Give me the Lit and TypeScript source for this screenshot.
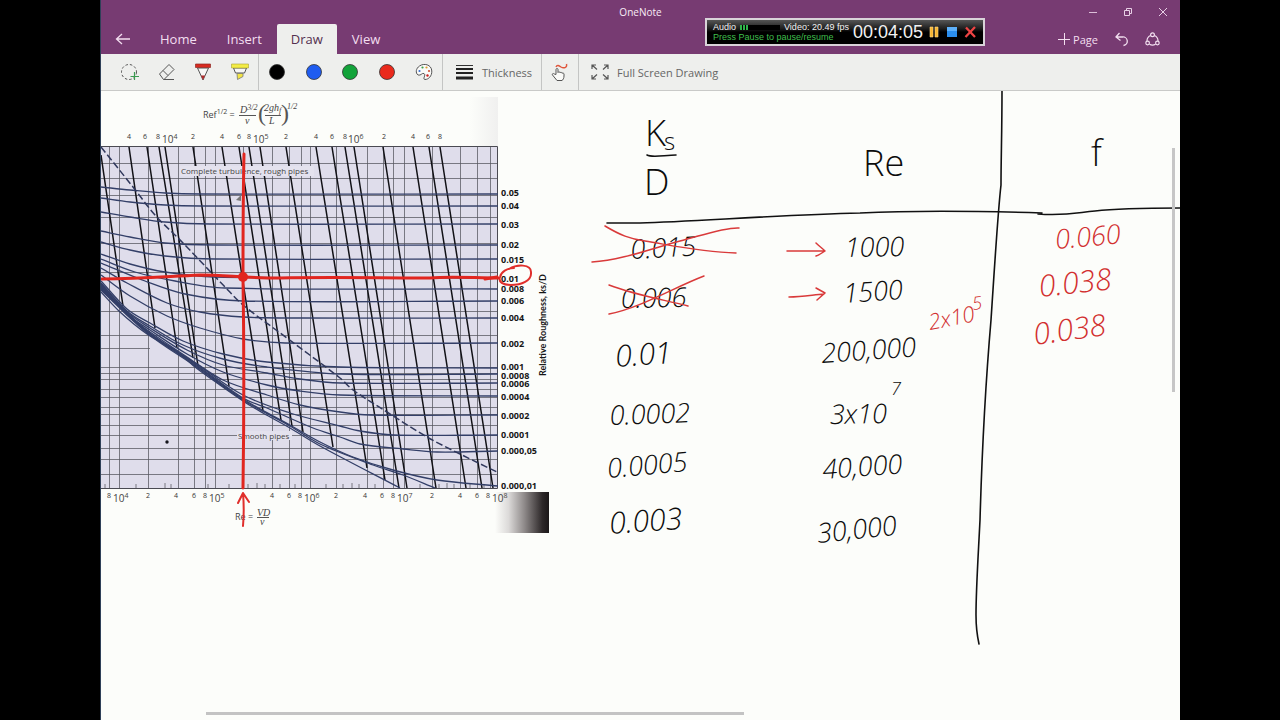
import { LitElement, html, svg, css } from "lit";
import { customElement, state } from "lit/decorators.js";
import { classMap } from "lit/directives/class-map.js";

type Mark = [string, number];
type Ink = { t: string; x: number; y: number; r?: number; red?: boolean; size?: string };

const TOP_TICKS: Mark[] = [
  ["4", 129], ["6", 145], ["8", 158], ["2", 193], ["4", 222], ["6", 239], ["8", 249],
  ["2", 286], ["4", 316], ["6", 332], ["8", 345], ["2", 384], ["4", 413], ["6", 428], ["8", 440],
];
const TOP_DECADES: Mark[] = [["4", 162], ["5", 253], ["6", 348]];
const BOTTOM_TICKS: Mark[] = [
  ["8", 109], ["2", 148], ["4", 176], ["6", 194], ["8", 205], ["4", 272], ["6", 289], ["8", 300],
  ["2", 336], ["4", 365], ["6", 382], ["8", 393], ["2", 432], ["4", 460], ["6", 477], ["8", 488],
];
const BOTTOM_DECADES: Mark[] = [["4", 113], ["5", 209], ["6", 304], ["7", 397], ["8", 492]];
const ROUGHNESS: Mark[] = [
  ["0.05", 196], ["0.04", 209], ["0.03", 228], ["0.02", 248], ["0.015", 263], ["0.01", 282],
  ["0.008", 292], ["0.006", 304], ["0.004", 321], ["0.002", 347], ["0.001", 370], ["0.0008", 379],
  ["0.0006", 387], ["0.0004", 400], ["0.0002", 419], ["0.0001", 438], ["0.000,05", 454], ["0.000,01", 489],
];

const GRID_X = [109, 119, 148, 178, 194, 205, 215, 243, 272, 289, 301, 310, 336, 367, 383, 393, 404, 432, 460, 477, 490];
const GRID_Y = [163, 178, 195, 217, 243, 272, 311, 335, 367, 373, 379, 389, 397, 407, 414, 425, 435, 448, 459, 474];

const SLANTED = [
  [101, 155, 123, 306], [129, 147, 155, 328], [147, 147, 177, 348], [159, 147, 193, 358],
  [165, 147, 198, 366], [193, 147, 229, 386], [222, 147, 263, 411], [239, 147, 281, 420],
  [249, 147, 292, 426], [260, 147, 303, 432], [286, 147, 333, 447], [316, 147, 367, 468],
  [332, 147, 385, 480], [345, 147, 399, 488], [354, 147, 407, 488], [383, 147, 436, 488],
  [413, 147, 466, 488], [429, 147, 482, 488], [440, 147, 493, 488],
];

const CURVES: number[][] = [
  [101, 187, 130, 190, 165, 193, 200, 194, 498, 194],
  [101, 198, 130, 202, 165, 205, 200, 206, 498, 206],
  [101, 212, 130, 217, 165, 222, 210, 224, 498, 224],
  [101, 231, 130, 237, 165, 243, 215, 245, 498, 245],
  [101, 242, 130, 250, 165, 256, 215, 259, 498, 259],
  [101, 254, 130, 264, 165, 272, 215, 277, 498, 278],
  [101, 259, 135, 272, 175, 281, 225, 288, 498, 289],
  [101, 263, 145, 281, 185, 294, 243, 301, 498, 301],
  [101, 268, 127, 283, 167, 303, 200, 312, 243, 317, 300, 318, 498, 318],
  [101, 275, 130, 296, 167, 316, 200, 328, 243, 339, 285, 343, 498, 343],
  [101, 281, 127, 309, 150, 323, 183, 341, 223, 354, 267, 362, 340, 367, 498, 368],
  [101, 283, 127, 311, 150, 326, 183, 345, 223, 359, 267, 367, 340, 374, 498, 374],
  [101, 284, 127, 312, 150, 328, 187, 350, 223, 365, 267, 373, 300, 379, 340, 383, 498, 383],
  [101, 285, 127, 314, 150, 330, 187, 354, 223, 372, 267, 385, 300, 391, 340, 395, 498, 396],
  [101, 286, 127, 315, 150, 332, 187, 357, 223, 380, 267, 395, 300, 405, 340, 412, 370, 415, 498, 415],
  [101, 287, 147, 331, 195, 363, 243, 395, 290, 413, 340, 426, 360, 431, 393, 435, 498, 435],
  [101, 288, 147, 331, 195, 364, 243, 398, 267, 408, 313, 428, 340, 437, 360, 444, 403, 449, 437, 452, 498, 451],
  [101, 289, 147, 332, 195, 365, 243, 399, 290, 425, 320, 442, 353, 457, 393, 470, 437, 480, 498, 486],
  [101, 290, 147, 333, 195, 366, 243, 400, 290, 426, 320, 444, 373, 465, 403, 475, 435, 488],
  [101, 292, 120, 312, 147, 334, 175, 350, 195, 367, 217, 383, 243, 401, 263, 413, 290, 428, 320, 446, 400, 488],
];

const DASHED = [101, 147, 133, 187, 155, 215, 183, 243, 225, 287, 243, 305, 287, 338, 340, 378, 353, 390, 387, 412, 427, 437, 460, 454, 497, 472];

const INK: Ink[] = [
  { t: "K", x: 645, y: 146, size: "head" },
  { t: "s", x: 664, y: 150, size: "sub" },
  { t: "D", x: 644, y: 195, size: "head" },
  { t: "Re", x: 863, y: 176, size: "head" },
  { t: "f", x: 1091, y: 166, size: "head" },
  { t: "0.015", x: 631, y: 259, r: -3 },
  { t: "1000", x: 845, y: 257, r: -1 },
  { t: "0.006", x: 621, y: 308, r: -1 },
  { t: "1500", x: 844, y: 303, r: -4 },
  { t: "0.01", x: 616, y: 367, r: -4, size: "big" },
  { t: "200,000", x: 822, y: 363, r: -4 },
  { t: "0.0002", x: 610, y: 425, r: -2 },
  { t: "3x10", x: 830, y: 424, r: -1 },
  { t: "7", x: 891, y: 395, size: "small" },
  { t: "0.0005", x: 608, y: 478, r: -5 },
  { t: "40,000", x: 823, y: 479, r: -4 },
  { t: "0.003", x: 610, y: 534, r: -4, size: "big" },
  { t: "30,000", x: 818, y: 543, r: -6 },
  { t: "0.060", x: 1056, y: 249, r: -5, red: true },
  { t: "0.038", x: 1040, y: 297, r: -6, red: true, size: "big" },
  { t: "0.038", x: 1035, y: 345, r: -8, red: true, size: "big" },
  { t: "2x10", x: 930, y: 330, r: -11, red: true, size: "mid" },
  { t: "5", x: 973, y: 310, r: -8, red: true, size: "small" },
];

/** Smooth path through a flat list of x, y pairs. */
function through(p: number[]): string {
  let d = `M${p[0]} ${p[1]}`;
  const n = p.length / 2;
  const at = (i: number, k: number) => p[Math.max(0, Math.min(n - 1, i)) * 2 + k];
  for (let i = 0; i < n - 1; i++) {
    const dx = at(i + 1, 0) - at(i, 0);
    const slope = (j: number) => {
      const a = Math.max(0, j - 1);
      const b = Math.min(n - 1, j + 1);
      return (at(b, 1) - at(a, 1)) / (at(b, 0) - at(a, 0) || 1);
    };
    d += `C${at(i, 0) + dx / 3} ${at(i, 1) + (slope(i) * dx) / 3} ${at(i + 1, 0) - dx / 3} ${at(i + 1, 1) - (slope(i + 1) * dx) / 3} ${at(i + 1, 0)} ${at(i + 1, 1)}`;
  }
  return d;
}

@customElement("moody-page")
class MoodyPage extends LitElement {
  static styles = css`
    :host { display: block; }
    .sheet { display: block; width: 100%; height: 100%; font-family: "Open Sans", sans-serif; }
    .paper { fill: #dfddeb; }
    .grid { stroke: #55555f; stroke-width: 1; fill: none; opacity: 0.75; }
    .frame { stroke: #4a4a52; stroke-width: 1; fill: none; }
    .slant { stroke: #111116; stroke-width: 1.5; fill: none; }
    .curve { stroke: #333f68; stroke-width: 1.3; fill: none; }
    .dash { stroke: #30385c; stroke-width: 1.5; fill: none; stroke-dasharray: 7 3; }
    .tick { font-size: 7px; fill: #333; text-anchor: middle; }
    .decade { font-size: 10px; fill: #444; }
    .sup { font-size: 7px; }
    .note { font-size: 8px; fill: #444; }
    .patch { fill: #e4e2ee; }
    .formula { font-size: 9px; fill: #444; }
    .math { font-family: "Liberation Serif", serif; font-style: italic; font-size: 10px; fill: #444; }
    .exp { font-size: 8px; }
    .paren { font-family: "Liberation Serif", serif; font-size: 24px; fill: #555; font-weight: 400; }
    .thin { stroke: #555; stroke-width: 1; fill: none; }
    .rough { font-size: 9px; font-weight: 700; fill: #161616; }
    .axis { font-family: Lato, sans-serif; font-size: 9px; font-weight: 700; fill: #161616; text-anchor: middle; }
    .redline { stroke: #e1261f; stroke-width: 3; fill: none; stroke-linecap: round; stroke-linejoin: round; }
    .redthin { stroke: #e02f2c; stroke-width: 2; fill: none; stroke-linecap: round; stroke-linejoin: round; }
    .cross { stroke: #d93a3a; stroke-width: 1.5; fill: none; stroke-linecap: round; stroke-linejoin: round; }
    .dot { fill: #e1261f; }
    .blot { fill: #15151c; }
    .pen { stroke: #111; stroke-width: 1.6; fill: none; stroke-linecap: round; }
    .hand { font-family: "Open Sans", sans-serif; font-weight: 300; font-style: italic; font-size: 27px; fill: #0c0c0c; }
    .hand.red { fill: #d22f2f; }
    .hand.head { font-size: 36px; font-style: normal; }
    .hand.sub { font-size: 24px; font-style: normal; }
    .hand.big { font-size: 30px; }
    .hand.mid { font-size: 22px; }
    .hand.small { font-size: 18px; }
  `;

  render() {
    return html`<svg class="sheet" viewBox="101 91 1079 629" preserveAspectRatio="xMinYMin meet" role="img" aria-label="Moody diagram and friction factor table">
      <defs>
        <linearGradient id="shade"><stop offset="0" stop-color="#fcfdfa" /><stop offset="0.25" stop-color="#dcdad9" /><stop offset="0.55" stop-color="#8d8888" /><stop offset="0.88" stop-color="#2c2728" /><stop offset="1" stop-color="#1b1718" /></linearGradient>
        <linearGradient id="scan"><stop offset="0" stop-color="#fcfdfa" /><stop offset="1" stop-color="#f0f0ef" /></linearGradient>
      </defs>
      <rect x="470" y="97" width="28" height="50" fill="url(#scan)" />
      <rect x="495" y="492" width="54" height="41" fill="url(#shade)" />
      <rect class="paper" x="101" y="147" width="397" height="341" />
      ${this.chart()} ${this.labels()} ${this.table()} ${this.annotations()}
    </svg>`;
  }

  private chart() {
    return svg`
      <path class="grid" d=${GRID_X.map((x) => `M${x}.5 147V488`).join("") + GRID_Y.map((y) => `M101 ${y}.5H498`).join("") + "M101 348.5H150"} />
      <path class="grid" d="M105 488v-4M136 488v-4M165 488v-5M171 488v-4M208 488v-4M229 488v-4M248 488v-4M257 488v-5M265 488v-4M280 488v-4M295 488v-4M326 488v-4M343 488v-4M352 488v-5M359 488v-4M375 488v-4M420 488v-4M439 488v-4M447 488v-5M454 488v-4M470 488v-4M484 488v-4" />
      <path class="frame" d="M101 146.5H497.5V488.5H101" />
      <path class="slant" d=${SLANTED.map(([a, b, c, d]) => `M${a} ${b}L${c} ${d}`).join("")} />
      ${CURVES.map((c) => svg`<path class="curve" d=${through(c)} />`)}
      <path class="dash" d=${through(DASHED)} />
      <rect class="patch" x="180" y="166" width="134" height="10" />
      <text class="note" x="181" y="174">Complete turbulence, rough pipes</text>
      <rect class="patch" x="237" y="431" width="55" height="9" />
      <text class="note" x="238" y="439">Smooth pipes</text>
      <circle class="blot" cx="167" cy="442" r="1.7" />
      <path d="M236 200l5-5v6z" fill="#777" />`;
  }

  private decade(m: Mark, y: number) {
    return svg`<text class="decade" x=${m[1]} y=${y}>10<tspan class="sup" dy="-4">${m[0]}</tspan></text>`;
  }

  private labels() {
    return svg`
      ${TOP_TICKS.map(([t, x]) => svg`<text class="tick" x=${x} y="139">${t}</text>`)}
      ${TOP_DECADES.map((m) => this.decade(m, 143))}
      ${BOTTOM_TICKS.map(([t, x]) => svg`<text class="tick" x=${x} y="498">${t}</text>`)}
      ${BOTTOM_DECADES.map((m) => this.decade(m, 502))}
      ${ROUGHNESS.map(([t, y]) => svg`<text class="rough" x="501" y=${y}>${t}</text>`)}
      <text class="axis" transform="translate(546 325) rotate(-90)">Relative Roughness, ks/D</text>
      <text class="formula" x="203" y="118">Ref<tspan class="sup" dy="-4">1/2</tspan><tspan dy="4"> =</tspan></text>
      <text class="math" x="240" y="113">D<tspan class="exp" dy="-3">3/2</tspan></text>
      <path class="thin" d="M239 115.5H256M265 115.5H281" />
      <text class="math" x="245" y="124">v</text>
      <text class="paren" x="258" y="121">(</text>
      <text class="math" x="264" y="111">2gh<tspan class="exp" dy="2">f</tspan></text>
      <text class="math" x="269" y="124">L</text>
      <text class="paren" x="281" y="121">)</text>
      <text class="math exp" x="287" y="109">1/2</text>
      <text class="formula" x="235" y="520">Re =</text>
      <text class="math" x="257" y="516">VD</text>
      <path class="thin" d="M257 517.5H269" />
      <text class="math" x="260" y="525">v</text>`;
  }

  private annotations() {
    return svg`
      <path class="redline" d="M102 279C140 279 160 277 200 275C225 275 245 278 280 278C330 277 380 278 430 278C450 276 475 278 498 278" />
      <path class="redline" d="M244 154C243 200 243 240 243 277C244 340 244 420 243 488" />
      <circle class="dot" cx="243" cy="277" r="5" />
      <path class="redline" d="M485 279L497 277" />
      <path class="redthin" d="M243 526C244 515 244 505 243 493M238 503L243 493L249 502" />
      <path class="redthin" d="M509 269C517 264 531 264 531 272C532 281 521 285 511 285C503 285 498 282 500 277C501 272 507 268 514 268" />
      <path class="cross" d="M605 226C620 235 630 239 645 241C670 245 700 252 736 253M592 262C622 260 650 249 680 241C700 236 725 227 739 228" />
      <path class="cross" d="M609 285C635 295 665 300 688 306M609 314C640 308 675 287 704 276" />
      <path class="cross" d="M787 251H824M816 243C819 246 822 248 825 251C822 253 819 255 816 256M789 297C802 297 812 295 824 294M816 288L825 293L817 300" />`;
  }

  private table() {
    return svg`
      <path class="pen" d="M607 223H640C700 221 780 215 860 213C920 210 980 211 1042 213M1038 214C1065 216 1075 213 1095 211C1120 208 1150 208 1180 208" />
      <path class="pen" d="M1002 91C1002 130 1001 160 1001 185C998 210 995 260 991 320C985 390 982 450 980 520C978 560 976 590 976 615C976 625 977 635 979 644" />
      <path class="pen" d="M647 155C652 158 665 155 676 155" />
      ${INK.map((i) => svg`<text class=${`hand ${i.red ? "red" : ""} ${i.size ?? ""}`} transform=${`translate(${i.x} ${i.y}) rotate(${i.r ?? 0})`}>${i.t}</text>`)}
      `;
  }
}

@customElement("recorder-bar")
class RecorderBar extends LitElement {
  static styles = css`
    :host { display: flex; box-sizing: border-box; height: 28px; width: 280px; border: 2px solid #d9d3d9; align-items: center; color: #f2f2f2; font-family: "Liberation Sans", sans-serif; background: linear-gradient(#555 0, #1c1c1c 9px, #000 12px); padding: 0 6px; }
    .info { display: grid; width: 140px; font-size: 9px; line-height: 10px; white-space: nowrap; }
    .row { display: flex; align-items: center; gap: 4px; }
    .meter { display: flex; flex: none; gap: 1px; width: 40px; height: 5px; background: #000; }
    .bar { width: 2px; background: #2fb54a; }
    .hint { color: #3fbe4c; }
    .clock { font-size: 18px; line-height: 24px; width: 72px; white-space: nowrap; }
    .controls { display: flex; flex: 1; justify-content: space-between; padding-left: 2px; }
    .ctl { display: block; border: 0; padding: 0; background: none; width: 14px; height: 14px; }
    .ico { display: block; width: 14px; height: 14px; }
  `;
  render() {
    return html`
      <div class="info">
        <div class="row"><span>Audio</span><span class="meter"><i class="bar"></i><i class="bar"></i><i class="bar"></i></span><span>Video: 20.49 fps</span></div>
        <div class="hint">Press Pause to pause/resume</div>
      </div>
      <div class="clock">00:04:05</div>
      <div class="controls">
        <button class="ctl" aria-label="Pause"><svg class="ico" viewBox="0 0 14 14"><path d="M3 2h3v10H3zM8 2h3v10H8z" fill="#f7b52e" stroke="#ffd98a" stroke-width=".6" /></svg></button>
        <button class="ctl" aria-label="Stop"><svg class="ico" viewBox="0 0 14 14"><path d="M2 2h10v10H2z" fill="#2b8eee" /><path d="M2 2h10v4H2z" fill="#5db0fa" /></svg></button>
        <button class="ctl" aria-label="Close recorder"><svg class="ico" viewBox="0 0 14 14"><path d="M3 2.500l9 9.500M12 2L2.500 12" stroke="#ee4444" stroke-width="2.300" /></svg></button>
      </div>`;
  }
}

@customElement("app-root")
class AppRoot extends LitElement {
  @state() private tab = "Draw";

  static styles = css`
    :host { display: block; box-sizing: border-box; height: 100vh; padding: 0 100px; background: #000; font-family: "Open Sans", "Noto Sans", sans-serif; }
    .window { position: relative; display: flex; flex-direction: column; height: 100%; box-sizing: border-box; border-left: 1px solid #2f4058; background: #fcfdfa; overflow: hidden; }
    button { font: inherit; color: inherit; background: none; border: 0; padding: 0; margin: 0; }
    svg { display: block; }
    .head { background: #773b72; color: #f3dff0; }
    .titlebar { display: grid; grid-template-columns: 1fr auto 1fr; align-items: center; height: 24px; color: #f7ecf6; }
    .title { grid-column: 2; font-size: 10px; }
    .winctl { display: flex; justify-content: flex-end; }
    .wbtn { display: grid; place-items: center; width: 35px; height: 24px; }
    .nav { display: flex; height: 30px; align-items: stretch; font-size: 13px; }
    .back { display: grid; place-items: center; width: 44px; }
    .tab { padding: 0 15px; border-radius: 2px 2px 0 0; }
    .tab.on { padding: 0 14px; background: #eeefed; color: #54304f; }
    .actions { display: flex; margin-left: auto; align-items: center; gap: 16px; padding-right: 20px; }
    .page { display: flex; align-items: center; gap: 3px; font-size: 11px; }
    .tools { display: flex; height: 36px; background: #eeefed; border-bottom: 1px solid #c9cac8; color: #666; font-size: 11px; }
    .group { display: flex; box-sizing: border-box; border-right: 1px solid #c4c5c4; }
    .picks { width: 158px; padding-left: 11px; }
    .inks { width: 184px; }
    .tool { display: flex; flex: 1; align-items: center; justify-content: center; }
    .full { display: flex; align-items: center; gap: 8px; padding: 0 12px; }
    .wide { gap: 9px; padding: 0 11px 0 13px; }
    .size { width: 99px; }
    .touch { width: 37px; }
    .canvas { flex: 1; min-height: 0; }
    .recorder { position: absolute; top: 18px; left: 604px; }
    .vbar { position: absolute; right: 5px; top: 148px; width: 3px; height: 244px; background: #c6c6c6; }
    .hbar { position: absolute; left: 105px; bottom: 5px; width: 538px; height: 3px; background: #c3c3c3; }
  `;

  render() {
    const colours = [["Black", "#000"], ["Blue", "#1f5cf0"], ["Green", "#12a33a"], ["Red", "#ea2a1c"]];
    return html`<main class="window">
      <header class="head">
        <div class="titlebar">
          <span class="title">OneNote</span>
          <div class="winctl">
            <button class="wbtn" aria-label="Minimise"><svg width="10" height="10" stroke="#dcbfd9" fill="none"><path d="M1 5.500h8" /></svg></button>
            <button class="wbtn" aria-label="Restore"><svg width="10" height="10" stroke="#e8d0e6" fill="none"><path d="M1.500 3.500h5v5h-5zM3.500 3V1.500h5v5H7" /></svg></button>
            <button class="wbtn" aria-label="Close"><svg width="10" height="10" stroke="#e8d0e6" fill="none"><path d="M1 1l8 8M9 1L1 9" /></svg></button>
          </div>
        </div>
        <nav class="nav">
          <button class="back" aria-label="Back"><svg width="16" height="12" stroke="#f3dff0" stroke-width="1.300" fill="none"><path d="M15 6H1.500M7 1L1.500 6L7 11" /></svg></button>
          ${["Home", "Insert", "Draw", "View"].map((t) => html`<button class=${classMap({ tab: true, on: t === this.tab })} @click=${() => (this.tab = t)}>${t}</button>`)}
          <div class="actions">
            <button class="page"><svg width="12" height="12" stroke="#f3dff0" fill="none"><path d="M6.500 0v12M0 6.500h12" /></svg>Page</button>
            <button aria-label="Undo"><svg width="15" height="15" viewBox="0 0 15 15" stroke="#f3dff0" stroke-width="1.300" fill="none"><path d="M5.500 1L2 5L6.500 8.500M2 5h6.500a4 4 0 0 1 1 8.500" /></svg></button>
            <button aria-label="Share"><svg width="15" height="15" viewBox="0 0 15 15" stroke="#f3dff0" stroke-width="1.200" fill="none"><circle cx="7.500" cy="2.800" r="1.900" /><circle cx="2.600" cy="11" r="1.800" /><circle cx="12.400" cy="11" r="1.800" /><path d="M5.500 3.500A6 6 0 0 0 2 9M9.500 3.500A6 6 0 0 1 13 9M4.500 12.300a6 6 0 0 0 6 0" /></svg></button>
          </div>
        </nav>
      </header>

      <div class="tools" role="toolbar" aria-label="Drawing tools">
        <div class="group picks">
          <button class="tool" aria-label="Lasso"><svg width="20" height="18" viewBox="0 0 20 18" fill="none"><circle cx="9" cy="9" r="7.500" stroke="#555" stroke-dasharray="2.500 2" /><path d="M14.500 9v8M10.500 13.500h8.500" stroke="#3b9a50" stroke-width="1.200" /></svg></button>
          <button class="tool" aria-label="Eraser"><svg width="18" height="18" viewBox="0 0 18 18" fill="none" stroke="#555"><path d="M1.500 11L11 1.500L16 6.500L6 16.500H5.500zM5 7.500l5 5M6 16.500h10" /></svg></button>
          <button class="tool" aria-label="Pen"><svg width="16" height="18" viewBox="0 0 16 18"><path d="M2.500 5L8 17L13.500 5z" fill="#f8f8f6" stroke="#555" /><path d="M.5 1h15v3.500H.5z" fill="#d82a20" stroke="#8d2a24" stroke-width=".7" /><path d="M6 12.500L8 17L10 12.500z" fill="#b32a2a" /></svg></button>
          <button class="tool" aria-label="Highlighter"><svg width="18" height="18" viewBox="0 0 18 18"><path d="M2.500 5l2 5h9l2-5z" fill="#f8f8f6" stroke="#555" /><path d="M.5 1h17v4H.5z" fill="#f3ec45" stroke="#a7a233" stroke-width=".6" /><path d="M6 10.500h6v3l-5.500 3z" fill="#f3e545" stroke="#777" stroke-width=".8" /></svg></button>
        </div>
        <div class="group inks">
          ${colours.map(([n, c]) => html`<button class="tool" aria-label=${n}><svg width="18" height="18"><circle cx="9" cy="9" r="7.500" fill=${c} stroke="#333" stroke-width=".8" /></svg></button>`)}
          <button class="tool" aria-label="More colours"><svg width="18" height="18" viewBox="0 0 18 18"><path d="M3 12C.3 10 .8 5.500 4.500 3C9-.2 16.500 1.500 16.800 8C17 13 13.500 16.500 10 16.500C7 16 11.500 12 9 10.500C7 9.500 6 13 3 12z" fill="#fafaf8" stroke="#555" /><circle cx="4.500" cy="8" r="1.100" fill="#3b6fd0" /><circle cx="7.500" cy="4.500" r="1.100" fill="#38a24c" /><circle cx="11.500" cy="4.500" r="1.100" fill="#e0a030" /><circle cx="14" cy="8" r="1.100" fill="#d05030" /><circle cx="12.500" cy="12.500" r="1.200" fill="#c22" /></svg></button>
        </div>
        <div class="group size"><button class="tool wide"><svg width="17" height="16"><path d="M0 1.500h17" stroke="#333" /><path d="M0 5h17" stroke="#222" stroke-width="2" /><path d="M0 9h17" stroke="#222" stroke-width="2" /><path d="M0 14h17" stroke="#222" stroke-width="3" /></svg>Thickness</button></div>
        <div class="group touch"><button class="tool" aria-label="Draw with touch"><svg width="18" height="18" viewBox="0 0 18 18" fill="none"><path d="M5 4C6 1.500 8 2.500 10 4C12.500 5.500 16.500 5 15.500 1" stroke="#e0563c" stroke-width="1.400" /><path d="M5 11.500V6.500c0-1.300 2-1.300 2 0V9.500c.5-1 2-.8 2 .3c.6-.8 2-.5 2 .5c.7-.6 2-.2 2 .8V13c0 2-1 4-2 4.500H6L1.500 12c-.8-1.200.8-2 1.800-1z" fill="#fafaf8" stroke="#555" /></svg></button></div>
        <button class="full"><svg width="18" height="16" viewBox="0 0 18 16" fill="none" stroke="#555" stroke-width="1.200"><path d="M1 5V1h4M1 1l5 4.500M13 1h4v4M17 1l-5 4.500M1 11v4h4M1 15l5-4.500M17 11v4h-4M17 15l-5-4.500" /></svg>Full Screen Drawing</button>
      </div>

      <moody-page class="canvas"></moody-page>
      <recorder-bar class="recorder"></recorder-bar>
      <div class="vbar"></div>
      <div class="hbar"></div>
    </main>`;
  }
}
